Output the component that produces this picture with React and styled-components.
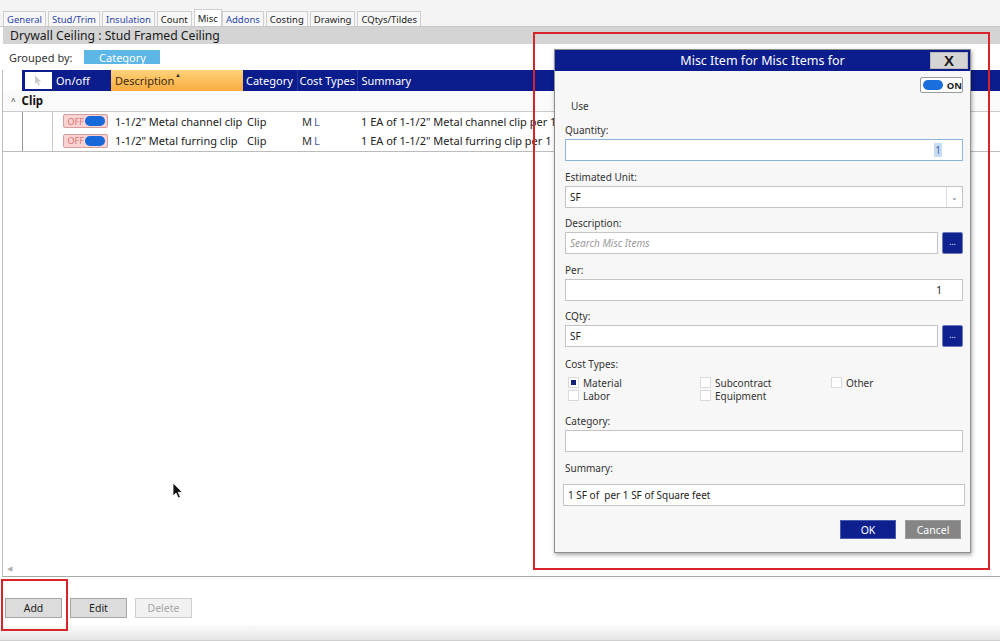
import React from "react";
import styled, { createGlobalStyle } from "styled-components";

const GlobalStyle = createGlobalStyle`
  html, body { margin: 0; padding: 0; }
  body {
    font-family: "Noto Sans", "Open Sans", sans-serif;
    background: #ffffff;
    color: #222;
  }
  * { box-sizing: border-box; }
`;

const NAVY = "#0b1c8c";

const Page = styled.div`
  position: relative;
  width: 1000px;
  height: 641px;
  overflow: hidden;
  display: flex;
  flex-direction: column;
  background: #ffffff;
`;

const TopStrip = styled.div`
  height: 10px;
  background: #f4f4f4;
`;

const TabBar = styled.div`
  display: flex;
  align-items: flex-end;
  height: 17px;
  padding-left: 3px;
  background: #f4f4f4;
  border-bottom: 1px solid #c8c8c8;
`;

const Tab = styled.div`
  height: ${(p) => (p.$active ? "17px" : "15px")};
  padding: 0 3px;
  margin-right: ${(p) => (p.$active ? "0" : "2px")};
  display: flex;
  align-items: center;
  font-size: 9.5px;
  color: ${(p) => (p.$blue ? "#2c45a8" : "#222")};
  background: ${(p) => (p.$active ? "#ffffff" : "#f7f7f7")};
  border: 1px solid #cfcfcf;
  border-bottom: none;
`;

const TitleBar = styled.div`
  height: 17px;
  margin-left: 3px;
  padding-left: 7px;
  display: flex;
  align-items: center;
  font-size: 12.2px;
  color: #1a1a1a;
  background: #d4d4d4;
`;

const GroupBar = styled.div`
  height: 26px;
  padding: 0 0 0 9px;
  display: flex;
  align-items: center;
  gap: 12px;
  font-size: 11px;
  color: #333;
`;

const GroupChip = styled.div`
  width: 76px;
  height: 14px;
  display: flex;
  align-items: center;
  justify-content: center;
  color: #ffffff;
  font-size: 11px;
  background: #5cb6e6;
`;

const GridPanel = styled.div`
  position: relative;
  flex: 1;
  margin-left: 2px;
  border-left: 1px solid #bdbdbd;
  border-bottom: 1px solid #a9a9a9;
`;

const Table = styled.table`
  width: 100%;
  border-collapse: collapse;
  table-layout: fixed;
  font-size: 11px;
`;

const HeadCell = styled.th`
  height: 21px;
  padding: 0 0 0 ${(p) => p.$pad || "4px"};
  text-align: left;
  font-weight: 400;
  font-size: 11px;
  white-space: nowrap;
  overflow: hidden;
  position: relative;
  color: ${(p) => (p.$sorted ? "#3a2a10" : "#ffffff")};
  background: ${(p) =>
    p.$blank
      ? "#ffffff"
      : p.$sorted
      ? "linear-gradient(#ffd27a, #f9ab40)"
      : NAVY};
  border-left: ${(p) => (p.$sep ? "1px solid #2a3aa0" : "none")};
`;

const SelectBox = styled.div`
  width: 27px;
  height: 17px;
  margin-left: -1px;
  background: #ffffff;
  display: flex;
  align-items: center;
  justify-content: center;
`;

const SortMark = styled.span`
  position: absolute;
  top: 1px;
  left: 64px;
  font-size: 6px;
  color: #333;
`;

const GroupRow = styled.tr`
  background: #fafafa;
  td {
    height: 20px;
    border-bottom: 1px solid #c9c9c9;
  }
`;

const GroupLabel = styled.td`
  padding-left: 8px;
  font-weight: 700;
  font-size: 11.5px;
  color: #111;
`;

const Caret = styled.span`
  display: inline-block;
  margin-right: 6px;
  font-size: 8px;
  font-weight: 400;
  vertical-align: 1px;
`;

const DataRow = styled.tr`
  td {
    height: 20px;
    white-space: nowrap;
    overflow: hidden;
    color: #222;
  }
  &:last-child td {
    border-bottom: 1px solid #bcbcbc;
  }
`;

const Cell = styled.td`
  padding-left: ${(p) => p.$pad || "4px"};
`;

const SelectorCell = styled.td`
  background: #ffffff;
  border-left: 1px solid #9a9a9a;
  border-right: 1px solid #c8c8c8;
  border-top: ${(p) => (p.$first ? "1px solid #9a9a9a" : "none")};
`;

const OffToggle = styled.div`
  width: 45px;
  height: 14px;
  margin-left: 10px;
  display: flex;
  align-items: center;
  justify-content: space-between;
  padding: 0 2px 0 4px;
  background: #f7d3d3;
  border: 1px solid #d79c9c;
  border-radius: 2px;
  font-size: 9px;
  color: #e27272;
`;

const Knob = styled.span`
  width: 20px;
  height: 10px;
  border-radius: 6px;
  background: ${(p) => p.$color || "#1768d8"};
`;

const CostM = styled.span`
  color: #333;
`;

const CostL = styled.span`
  color: #4a5fb0;
  margin-left: 2px;
`;

const ScrollHint = styled.span`
  position: absolute;
  left: 4px;
  bottom: 3px;
  font-size: 7px;
  color: #b0b0b0;
`;

const Footer = styled.div`
  height: 48px;
  padding: 21px 0 0 5px;
  display: flex;
  gap: 8px;
`;

const FootButton = styled.button`
  width: 57px;
  height: 20px;
  padding: 0;
  font-family: inherit;
  font-size: 10.5px;
  color: ${(p) => (p.disabled ? "#a8a8a8" : "#222")};
  background: ${(p) => (p.disabled ? "#f1f1f1" : "#dcdcdc")};
  border: 1px solid ${(p) => (p.disabled ? "#cfcfcf" : "#a6a6a6")};
`;

const BottomStrip = styled.div`
  height: 16px;
  background: linear-gradient(#fbfbfb, #e6e6e6);
  border-bottom: 1px solid #cfcfcf;
`;

/* dialog */

const Dialog = styled.div`
  position: absolute;
  left: 554px;
  top: 49px;
  width: 417px;
  height: 504px;
  background: #f7f7f7;
  border: 1px solid #8e8e8e;
  box-shadow: 1px 2px 4px rgba(0, 0, 0, 0.35);
  display: flex;
  flex-direction: column;
`;

const DialogTitle = styled.div`
  position: relative;
  height: 21px;
  flex-shrink: 0;
  display: flex;
  align-items: center;
  justify-content: center;
  background: ${NAVY};
  color: #ffffff;
  font-size: 12.5px;
`;

const CloseButton = styled.div`
  position: absolute;
  right: 2px;
  top: 2px;
  width: 38px;
  height: 17px;
  display: flex;
  align-items: center;
  justify-content: center;
  background: #d4d4d4;
  border: 1px solid #b8b8b8;
  color: #1a1a1a;
  font-family: "Liberation Sans", Arial, sans-serif;
  font-weight: 700;
  font-size: 15px;
`;

const DialogBody = styled.div`
  flex: 1;
  padding: 6px 7px 0 10px;
  display: flex;
  flex-direction: column;
`;

const OnRow = styled.div`
  display: flex;
  justify-content: flex-end;
`;

const OnToggle = styled.div`
  width: 43px;
  height: 16px;
  display: flex;
  align-items: center;
  gap: 4px;
  padding-left: 2px;
  background: #ffffff;
  border: 1px solid #9a9a9a;
  border-radius: 2px;
  font-size: 9.5px;
  font-weight: 700;
  color: #222;
`;

const UseLabel = styled.div`
  margin: 6px 0 0 6px;
  font-size: 10px;
  line-height: 14px;
  color: #333;
`;

const Field = styled.div`
  margin-top: ${(p) => p.$top || "8.5px"};
  display: flex;
  flex-direction: column;
`;

const Label = styled.div`
  font-size: 10px;
  line-height: 14px;
  color: #333;
  margin-bottom: ${(p) => p.$gap || "2px"};
`;

const InputRow = styled.div`
  display: flex;
  gap: 4px;
`;

const Input = styled.div`
  flex: 1 1 auto;
  height: 22px;
  display: flex;
  align-items: center;
  justify-content: ${(p) => (p.$right ? "flex-end" : "flex-start")};
  padding: 0 ${(p) => (p.$right ? "20px" : "4px")} 0 4px;
  background: #ffffff;
  border: 1px solid ${(p) => (p.$focus ? "#8fb3da" : "#c4c4c4")};
  font-size: 10px;
  color: #222;
  margin: ${(p) => (p.$wide ? "0 -2px 0 -2px" : "0")};
`;

const Placeholder = styled.span`
  font-style: italic;
  color: #9a9a9a;
`;

const Selected = styled.span`
  background: #c6dcf3;
  color: #3a66a8;
  padding: 0 1px;
`;

const SelectArrow = styled.div`
  margin-left: auto;
  margin-right: -4px;
  width: 16px;
  height: 20px;
  border-left: 1px solid #dedede;
  display: flex;
  align-items: center;
  justify-content: center;
  font-size: 8px;
  color: #777;
`;

const DotsButton = styled.div`
  width: 21px;
  height: 22px;
  flex-shrink: 0;
  display: flex;
  align-items: center;
  justify-content: center;
  background: #10228f;
  border: 1px solid #6c7bb8;
  border-radius: 2px;
  color: #ffffff;
  font-size: 8px;
  line-height: 1;
  padding-bottom: 3px;
`;

const CostGrid = styled.div`
  display: grid;
  grid-template-columns: 132px 131px 1fr;
  padding-left: 3px;
  margin-top: 3px;
`;

const Check = styled.div`
  display: flex;
  align-items: center;
  gap: 4px;
  height: 13px;
  font-size: 10px;
  color: #333;
`;

const Box = styled.span`
  width: 11px;
  height: 11px;
  background: #ffffff;
  border: 1px solid #dadada;
  display: flex;
  align-items: center;
  justify-content: center;
  &::after {
    content: "";
    width: 5px;
    height: 5px;
    background: ${(p) => (p.$checked ? "#14207a" : "transparent")};
  }
`;

const ButtonRow = styled.div`
  margin-top: 14px;
  display: flex;
  justify-content: flex-end;
  gap: 9px;
  padding-right: 2px;
`;

const DialogButton = styled.div`
  width: 56px;
  height: 19px;
  display: flex;
  align-items: center;
  justify-content: center;
  font-size: 10.5px;
  color: #ffffff;
  background: ${(p) => (p.$primary ? "#0e1f8e" : "#858585")};
  border: 1px solid ${(p) => (p.$primary ? "#4a5bb0" : "#9a9a9a")};
`;

/* annotations */

const Marker = styled.div`
  position: absolute;
  border: 2px solid #d8232a;
  pointer-events: none;
`;

const Cursor = styled.svg`
  position: absolute;
  left: 172px;
  top: 482px;
`;

const tabs = [
  { name: "General", blue: true },
  { name: "Stud/Trim", blue: true },
  { name: "Insulation", blue: true },
  { name: "Count" },
  { name: "Misc", active: true },
  { name: "Addons", blue: true },
  { name: "Costing" },
  { name: "Drawing" },
  { name: "CQtys/Tildes" },
];

const items = [
  {
    description: '1-1/2" Metal channel clip',
    category: "Clip",
    summary: '1 EA of 1-1/2" Metal channel clip per 1 SF',
  },
  {
    description: '1-1/2" Metal furring clip',
    category: "Clip",
    summary: '1 EA of 1-1/2" Metal furring clip per 1 SF',
  },
];

const costTypes = [
  { name: "Material", checked: true },
  { name: "Subcontract" },
  { name: "Other" },
  { name: "Labor" },
  { name: "Equipment" },
];

const PointerIcon = () => (
  <svg width="9" height="11" viewBox="0 0 9 11">
    <path d="M1 0.5 L1 9 L3 7 L4.6 10.5 L6 9.9 L4.4 6.5 L7.3 6.5 Z" fill="#c9c9c9" />
  </svg>
);

const MiscDialog = () => (
  <Dialog>
    <DialogTitle>
      Misc Item for Misc Items for
      <CloseButton>X</CloseButton>
    </DialogTitle>
    <DialogBody>
      <OnRow>
        <OnToggle>
          <Knob $color="#1a6fdc" />
          ON
        </OnToggle>
      </OnRow>
      <UseLabel>Use</UseLabel>
      <Field $top="10px">
        <Label>Quantity:</Label>
        <Input $focus $right>
          <Selected>1</Selected>
        </Input>
      </Field>
      <Field>
        <Label>Estimated Unit:</Label>
        <Input>
          SF
          <SelectArrow>&#8964;</SelectArrow>
        </Input>
      </Field>
      <Field>
        <Label>Description:</Label>
        <InputRow>
          <Input>
            <Placeholder>Search Misc Items</Placeholder>
          </Input>
          <DotsButton>...</DotsButton>
        </InputRow>
      </Field>
      <Field>
        <Label>Per:</Label>
        <Input $right>1</Input>
      </Field>
      <Field>
        <Label>CQty:</Label>
        <InputRow>
          <Input>SF</Input>
          <DotsButton>...</DotsButton>
        </InputRow>
      </Field>
      <Field $top="10px">
        <Label>Cost Types:</Label>
        <CostGrid>
          {costTypes.map((c) => (
            <Check key={c.name}>
              <Box $checked={c.checked} />
              {c.name}
            </Check>
          ))}
        </CostGrid>
      </Field>
      <Field $top="12px">
        <Label>Category:</Label>
        <Input />
      </Field>
      <Field $top="9px">
        <Label $gap="9px">Summary:</Label>
        <Input $wide>1 SF of &nbsp;per 1 SF of Square feet</Input>
      </Field>
      <ButtonRow>
        <DialogButton $primary>OK</DialogButton>
        <DialogButton>Cancel</DialogButton>
      </ButtonRow>
    </DialogBody>
  </Dialog>
);

const App = () => {
  return (
    <>
      <GlobalStyle />
      <Page>
        <TopStrip />
        <TabBar>
          {tabs.map((t) => (
            <Tab key={t.name} $active={t.active} $blue={t.blue}>
              {t.name}
            </Tab>
          ))}
        </TabBar>
        <TitleBar>Drywall Ceiling : Stud Framed Ceiling</TitleBar>
        <GroupBar>
          Grouped by:
          <GroupChip>Category</GroupChip>
        </GroupBar>
        <GridPanel>
          <Table>
            <colgroup>
              <col style={{ width: 19 }} />
              <col style={{ width: 30 }} />
              <col style={{ width: 59 }} />
              <col style={{ width: 132 }} />
              <col style={{ width: 54 }} />
              <col style={{ width: 60 }} />
              <col />
            </colgroup>
            <thead>
              <tr>
                <HeadCell $blank />
                <HeadCell>
                  <SelectBox>
                    <PointerIcon />
                  </SelectBox>
                </HeadCell>
                <HeadCell>On/off</HeadCell>
                <HeadCell $sorted>
                  Description
                  <SortMark>&#9650;</SortMark>
                </HeadCell>
                <HeadCell $pad="3px">Category</HeadCell>
                <HeadCell $sep $pad="2px">Cost Types</HeadCell>
                <HeadCell $sep>Summary</HeadCell>
              </tr>
            </thead>
            <tbody>
              <GroupRow>
                <GroupLabel colSpan={7}>
                  <Caret>&#94;</Caret>
                  Clip
                </GroupLabel>
              </GroupRow>
              {items.map((row, index) => (
                <DataRow key={index}>
                  <Cell />
                  <SelectorCell $first={index === 0} />
                  <Cell $pad="0">
                    <OffToggle>
                      OFF
                      <Knob />
                    </OffToggle>
                  </Cell>
                  <Cell>{row.description}</Cell>
                  <Cell>{row.category}</Cell>
                  <Cell $pad="5px">
                    <CostM>M</CostM>
                    <CostL>L</CostL>
                  </Cell>
                  <Cell>{row.summary}</Cell>
                </DataRow>
              ))}
            </tbody>
          </Table>
          <ScrollHint>&#9664;</ScrollHint>
        </GridPanel>
        <Footer>
          <FootButton>Add</FootButton>
          <FootButton>Edit</FootButton>
          <FootButton disabled>Delete</FootButton>
        </Footer>
        <BottomStrip />

        <MiscDialog />

        <Marker style={{ left: 533, top: 32, width: 457, height: 538 }} />
        <Marker style={{ left: 1, top: 579, width: 67, height: 52 }} />

        <Cursor width="12" height="18" viewBox="0 0 12 18">
          <path
            d="M1 1 L1 14 L4 11 L6.3 16 L8.4 15.1 L6.2 10.3 L10.4 10.3 Z"
            fill="#111"
            stroke="#fff"
            strokeWidth="0.8"
          />
        </Cursor>
      </Page>
    </>
  );
};

export default App;
